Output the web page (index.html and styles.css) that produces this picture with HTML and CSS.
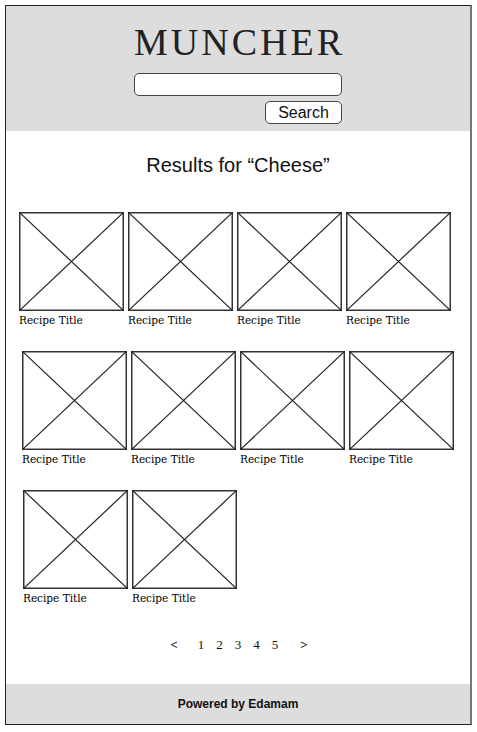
FILE: index.html
```html
<!DOCTYPE html>
<html lang="en">
<head>
    <meta charset="UTF-8">
    <meta name="viewport" content="width=device-width, initial-scale=1.0">
    <title>Muncher - Results</title>
    <link rel="stylesheet" href="styles.css">
</head>
<body>
    <div class="frame">
        <header class="top">
            <h1 class="logo">MUNCHER</h1>
            <div class="searchBox">
                <input type="text" class="searchInput">
                <button class="searchBtn">Search</button>
            </div>
        </header>

        <main class="results">
            <h2 class="resultsTitle">Results for “Cheese”</h2>

            <div class="row row1">
                <div class="card"><svg class="thumb" viewBox="0 0 105 99" preserveAspectRatio="none"><rect x="0.75" y="0.75" width="103.5" height="97.5" fill="#fff" stroke="#333" stroke-width="1.5"/><line x1="0" y1="0" x2="105" y2="99" stroke="#222" stroke-width="1.2"/><line x1="105" y1="0" x2="0" y2="99" stroke="#222" stroke-width="1.2"/></svg><p class="cardTitle">Recipe Title</p></div>
                <div class="card"><svg class="thumb" viewBox="0 0 105 99" preserveAspectRatio="none"><rect x="0.75" y="0.75" width="103.5" height="97.5" fill="#fff" stroke="#333" stroke-width="1.5"/><line x1="0" y1="0" x2="105" y2="99" stroke="#222" stroke-width="1.2"/><line x1="105" y1="0" x2="0" y2="99" stroke="#222" stroke-width="1.2"/></svg><p class="cardTitle">Recipe Title</p></div>
                <div class="card"><svg class="thumb" viewBox="0 0 105 99" preserveAspectRatio="none"><rect x="0.75" y="0.75" width="103.5" height="97.5" fill="#fff" stroke="#333" stroke-width="1.5"/><line x1="0" y1="0" x2="105" y2="99" stroke="#222" stroke-width="1.2"/><line x1="105" y1="0" x2="0" y2="99" stroke="#222" stroke-width="1.2"/></svg><p class="cardTitle">Recipe Title</p></div>
                <div class="card"><svg class="thumb" viewBox="0 0 105 99" preserveAspectRatio="none"><rect x="0.75" y="0.75" width="103.5" height="97.5" fill="#fff" stroke="#333" stroke-width="1.5"/><line x1="0" y1="0" x2="105" y2="99" stroke="#222" stroke-width="1.2"/><line x1="105" y1="0" x2="0" y2="99" stroke="#222" stroke-width="1.2"/></svg><p class="cardTitle">Recipe Title</p></div>
            </div>

            <div class="row row2">
                <div class="card"><svg class="thumb" viewBox="0 0 105 99" preserveAspectRatio="none"><rect x="0.75" y="0.75" width="103.5" height="97.5" fill="#fff" stroke="#333" stroke-width="1.5"/><line x1="0" y1="0" x2="105" y2="99" stroke="#222" stroke-width="1.2"/><line x1="105" y1="0" x2="0" y2="99" stroke="#222" stroke-width="1.2"/></svg><p class="cardTitle">Recipe Title</p></div>
                <div class="card"><svg class="thumb" viewBox="0 0 105 99" preserveAspectRatio="none"><rect x="0.75" y="0.75" width="103.5" height="97.5" fill="#fff" stroke="#333" stroke-width="1.5"/><line x1="0" y1="0" x2="105" y2="99" stroke="#222" stroke-width="1.2"/><line x1="105" y1="0" x2="0" y2="99" stroke="#222" stroke-width="1.2"/></svg><p class="cardTitle">Recipe Title</p></div>
                <div class="card"><svg class="thumb" viewBox="0 0 105 99" preserveAspectRatio="none"><rect x="0.75" y="0.75" width="103.5" height="97.5" fill="#fff" stroke="#333" stroke-width="1.5"/><line x1="0" y1="0" x2="105" y2="99" stroke="#222" stroke-width="1.2"/><line x1="105" y1="0" x2="0" y2="99" stroke="#222" stroke-width="1.2"/></svg><p class="cardTitle">Recipe Title</p></div>
                <div class="card"><svg class="thumb" viewBox="0 0 105 99" preserveAspectRatio="none"><rect x="0.75" y="0.75" width="103.5" height="97.5" fill="#fff" stroke="#333" stroke-width="1.5"/><line x1="0" y1="0" x2="105" y2="99" stroke="#222" stroke-width="1.2"/><line x1="105" y1="0" x2="0" y2="99" stroke="#222" stroke-width="1.2"/></svg><p class="cardTitle">Recipe Title</p></div>
            </div>

            <div class="row row3">
                <div class="card"><svg class="thumb" viewBox="0 0 105 99" preserveAspectRatio="none"><rect x="0.75" y="0.75" width="103.5" height="97.5" fill="#fff" stroke="#333" stroke-width="1.5"/><line x1="0" y1="0" x2="105" y2="99" stroke="#222" stroke-width="1.2"/><line x1="105" y1="0" x2="0" y2="99" stroke="#222" stroke-width="1.2"/></svg><p class="cardTitle">Recipe Title</p></div>
                <div class="card"><svg class="thumb" viewBox="0 0 105 99" preserveAspectRatio="none"><rect x="0.75" y="0.75" width="103.5" height="97.5" fill="#fff" stroke="#333" stroke-width="1.5"/><line x1="0" y1="0" x2="105" y2="99" stroke="#222" stroke-width="1.2"/><line x1="105" y1="0" x2="0" y2="99" stroke="#222" stroke-width="1.2"/></svg><p class="cardTitle">Recipe Title</p></div>
            </div>

            <nav class="pager">
                <span class="arrow">&lt;</span>
                <span class="pages">
                    <span>1</span><span>2</span><span>3</span><span>4</span><span>5</span>
                </span>
                <span class="arrow">&gt;</span>
            </nav>
        </main>

        <footer class="bottom">
            <p>Powered by Edamam</p>
        </footer>
    </div>
</body>
</html>
```

FILE: styles.css
```css
*{
    margin: 0; padding: 0;
    box-sizing: border-box;
}
body{
    background-color: #fff;
    font-family: "Liberation Sans", Arial, sans-serif;
    color: #111;
}
.frame{
    width: 467px;
    height: 720px;
    margin: 5px 0 0 5px;
    border: 1px solid #222;
    border-right: 2px solid #777;
    display: flex;
    flex-direction: column;
}

/* header */
.top{
    height: 125px;
    background-color: #dddddd;
    display: flex;
    flex-direction: column;
    align-items: center;
    padding-top: 14px;
}
.logo{
    font-family: "Liberation Serif", "Times New Roman", serif;
    font-weight: normal;
    font-size: 38px;
    line-height: 44px;
    letter-spacing: 3px;
    margin-right: -3px;
    color: #222;
}
.searchBox{
    width: 208px;
    display: flex;
    flex-direction: column;
    align-items: flex-end;
    gap: 5px;
    margin-top: 9px;
}
.searchInput{
    width: 208px;
    height: 23px;
    border: 1px solid #444;
    border-radius: 5px;
    background-color: #fff;
    outline: 0;
}
.searchBtn{
    width: 77px;
    height: 23px;
    border: 1px solid #444;
    border-radius: 5px;
    background-color: #fff;
    font-family: "Liberation Sans", Arial, sans-serif;
    font-size: 16px;
    color: #111;
}

/* results */
.results{
    flex: 1;
    padding-top: 22px;
}
.resultsTitle{
    font-weight: normal;
    font-size: 20px;
    line-height: 24px;
    text-align: center;
    margin-bottom: 35px;
}
.row{
    display: flex;
    gap: 4px;
    margin-bottom: 24px;
}
.row1{ padding-left: 13px; }
.row2{ padding-left: 16px; }
.row3{ padding-left: 17px; }
.card{
    width: 105px;
}
.thumb{
    display: block;
    width: 105px;
    height: 99px;
}
.cardTitle{
    font-family: "DejaVu Serif", "Liberation Serif", serif;
    font-size: 10.5px;
    line-height: 14px;
    margin-top: 2px;
    color: #000;
}

/* pager */
.pager{
    display: flex;
    justify-content: center;
    align-items: center;
    font-family: "Liberation Serif", "Times New Roman", serif;
    font-size: 13px;
    padding-top: 8px;
    padding-left: 2px;
}
.arrow{
    font-weight: bold;
}
.pages{
    display: flex;
    gap: 12px;
    margin: 0 22px 0 20px;
}

/* footer */
.bottom{
    height: 40px;
    background-color: #dddddd;
    display: flex;
    align-items: center;
    justify-content: center;
    font-weight: bold;
    font-size: 12px;
}
```
